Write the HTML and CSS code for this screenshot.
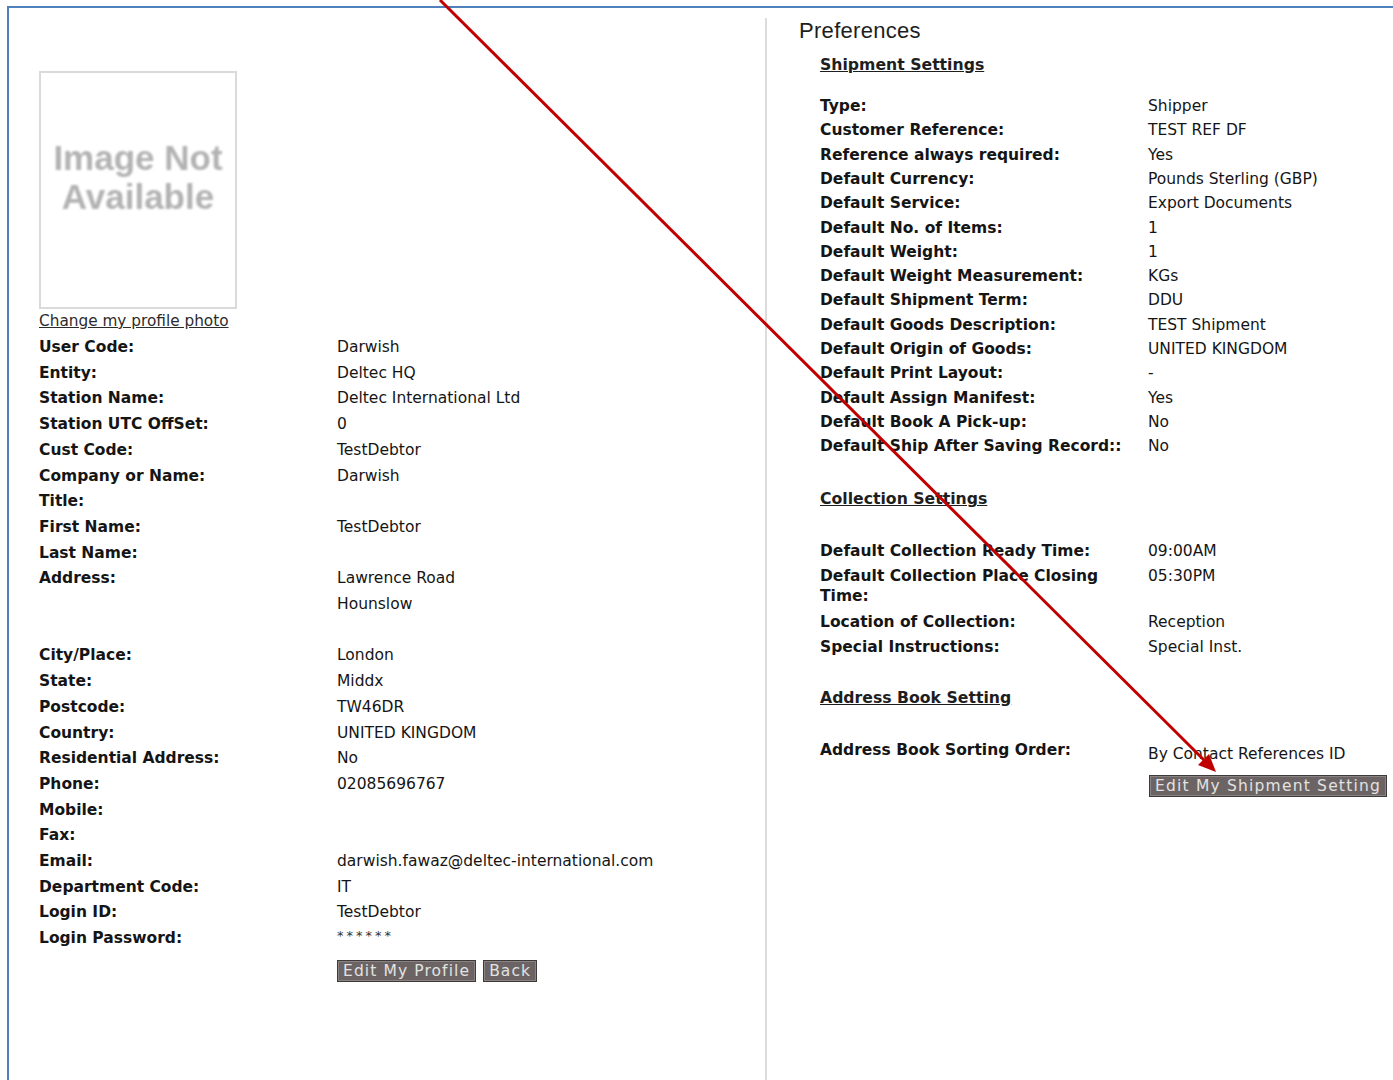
FILE: index.html
```html
<!DOCTYPE html>
<html lang="en">
<head>
<meta charset="utf-8">
<title>My Profile</title>
<link rel="stylesheet" href="styles.css">
</head>
<body>
<div class="frame">
  <div class="profile">
    <div class="photo">
      <span class="photo-text">Image Not<br>Available</span>
    </div>
    <a class="photo-link" href="#">Change my profile photo</a>
    <div class="details">
      <div class="lbl">User Code:</div><div class="val">Darwish</div>
      <div class="lbl">Entity:</div><div class="val">Deltec HQ</div>
      <div class="lbl">Station Name:</div><div class="val">Deltec International Ltd</div>
      <div class="lbl">Station UTC OffSet:</div><div class="val">0</div>
      <div class="lbl">Cust Code:</div><div class="val">TestDebtor</div>
      <div class="lbl">Company or Name:</div><div class="val">Darwish</div>
      <div class="lbl">Title:</div><div class="val"></div>
      <div class="lbl">First Name:</div><div class="val">TestDebtor</div>
      <div class="lbl">Last Name:</div><div class="val"></div>
      <div class="lbl">Address:</div><div class="val">Lawrence Road<br>Hounslow<br>&nbsp;</div>
      <div class="lbl">City/Place:</div><div class="val">London</div>
      <div class="lbl">State:</div><div class="val">Middx</div>
      <div class="lbl">Postcode:</div><div class="val">TW46DR</div>
      <div class="lbl">Country:</div><div class="val">UNITED KINGDOM</div>
      <div class="lbl">Residential Address:</div><div class="val">No</div>
      <div class="lbl">Phone:</div><div class="val">02085696767</div>
      <div class="lbl">Mobile:</div><div class="val"></div>
      <div class="lbl">Fax:</div><div class="val"></div>
      <div class="lbl">Email:</div><div class="val">darwish.fawaz@deltec-international.com</div>
      <div class="lbl">Department Code:</div><div class="val">IT</div>
      <div class="lbl">Login ID:</div><div class="val">TestDebtor</div>
      <div class="lbl">Login Password:</div><div class="val pwd">******</div>
      <div></div>
      <div class="actions">
        <button class="btn" type="button">Edit My Profile</button>
        <button class="btn" type="button">Back</button>
      </div>
    </div>
  </div>

  <div class="prefs">
    <h2 class="prefs-title">Preferences</h2>

    <h3 class="section-title first">Shipment Settings</h3>
    <div class="settings">
      <div class="lbl">Type:</div><div class="val">Shipper</div>
      <div class="lbl">Customer Reference:</div><div class="val">TEST REF DF</div>
      <div class="lbl">Reference always required:</div><div class="val">Yes</div>
      <div class="lbl">Default Currency:</div><div class="val">Pounds Sterling (GBP)</div>
      <div class="lbl">Default Service:</div><div class="val">Export Documents</div>
      <div class="lbl">Default No. of Items:</div><div class="val">1</div>
      <div class="lbl">Default Weight:</div><div class="val">1</div>
      <div class="lbl">Default Weight Measurement:</div><div class="val">KGs</div>
      <div class="lbl">Default Shipment Term:</div><div class="val">DDU</div>
      <div class="lbl">Default Goods Description:</div><div class="val">TEST Shipment</div>
      <div class="lbl">Default Origin of Goods:</div><div class="val">UNITED KINGDOM</div>
      <div class="lbl">Default Print Layout:</div><div class="val">-</div>
      <div class="lbl">Default Assign Manifest:</div><div class="val">Yes</div>
      <div class="lbl">Default Book A Pick-up:</div><div class="val">No</div>
      <div class="lbl">Default Ship After Saving Record::</div><div class="val">No</div>
    </div>

    <h3 class="section-title">Collection Settings</h3>
    <div class="settings roomy">
      <div class="lbl">Default Collection Ready Time:</div><div class="val">09:00AM</div>
      <div class="lbl">Default Collection Place Closing Time:</div><div class="val">05:30PM</div>
      <div class="lbl">Location of Collection:</div><div class="val">Reception</div>
      <div class="lbl">Special Instructions:</div><div class="val">Special Inst.</div>
    </div>

    <h3 class="section-title last">Address Book Setting</h3>
    <div class="settings">
      <div class="lbl">Address Book Sorting Order:</div>
      <div class="val sort">By Contact References ID
        <button class="btn wide" type="button">Edit My Shipment Setting</button>
      </div>
    </div>
  </div>
</div>

<svg class="pointer" width="1393" height="1080" viewBox="0 0 1393 1080" aria-hidden="true">
  <line x1="440" y1="0" x2="1206" y2="762" stroke="#c00000" stroke-width="3"/>
  <polygon points="1216,772 1198,765 1209,754" fill="#c00000"/>
</svg>
</body>
</html>
```

FILE: styles.css
```css
html, body {
  margin: 0;
  padding: 0;
  background: #ffffff;
}

body {
  font-family: "DejaVu Sans", Verdana, sans-serif;
  font-size: 15.5px;
  color: #151515;
  height: 1080px;
  overflow: hidden;
}

.frame {
  margin: 6px 0 0 7px;
  height: 1074px;
  border-top: 2px solid #4f81bd;
  border-left: 2px solid #4f81bd;
  display: flex;
  align-items: flex-start;
}

/* ---------- left: user profile ---------- */
.profile {
  width: 726px;
  padding: 63px 0 0 30px;
  flex: none;
}

.photo {
  width: 194px;
  height: 234px;
  border: 2px solid #dadada;
  display: flex;
  align-items: center;
  justify-content: center;
}

.photo-text {
  font-family: "Liberation Sans", Arial, sans-serif;
  font-weight: bold;
  font-size: 35px;
  line-height: 39px;
  color: #b2b2b2;
  text-align: center;
  filter: blur(0.9px);
  margin-top: -26px;
}

.photo-link {
  display: block;
  width: max-content;
  font-size: 15.3px;
  line-height: 22px;
  color: #2b2b2b;
  text-decoration: underline;
  margin-top: 1px;
}

.details {
  display: grid;
  grid-template-columns: 298px 1fr;
  margin-top: 3px;
  line-height: 25.7px;
}

.lbl {
  font-weight: bold;
  white-space: nowrap;
}

.val {
  white-space: nowrap;
}

.pwd {
  font-size: 13px;
  letter-spacing: 3px;
  line-height: 20px;
  color: #333333;
}

.actions {
  display: flex;
  gap: 7px;
  margin-top: 8px;
}

.btn {
  font-family: "DejaVu Sans", Verdana, sans-serif;
  font-size: 15.5px;
  letter-spacing: 1.1px;
  color: #e2e2e2;
  background: #6c6464;
  border: 1px solid #3e3a3a;
  box-shadow: inset 0 0 0 1px #8a8383;
  padding: 0 5px;
  height: 22px;
  line-height: 20px;
  cursor: pointer;
}

/* ---------- right: preferences ---------- */
.prefs {
  flex: 1;
  margin-top: 10px;
  min-height: 1064px;
  border-left: 2px solid #dcdcdc;
  padding-left: 32px;
}

.prefs-title {
  font-family: "Liberation Sans", Arial, sans-serif;
  font-size: 22px;
  letter-spacing: 0.3px;
  font-weight: normal;
  color: #1e1e1e;
  line-height: 26px;
  margin: 0;
}

.section-title {
  font-size: 15.7px;
  font-weight: bold;
  text-decoration: underline;
  color: #1e1e1e;
  line-height: 22px;
  margin: 30px 0 29px 21px;
  width: max-content;
}

.section-title.first {
  margin-top: 10px;
  margin-bottom: 18px;
}

.section-title.last {
  margin-top: 27px;
}

.settings {
  display: grid;
  grid-template-columns: 328px 1fr;
  margin-left: 21px;
}

.settings .lbl {
  white-space: normal;
  line-height: 20px;
  padding: 2.15px 16px 2.15px 0;
}

.settings .val {
  line-height: 20px;
  padding: 2.15px 0;
}

.settings.roomy .lbl,
.settings.roomy .val {
  padding-top: 2.7px;
  padding-bottom: 2.7px;
}

.settings.roomy {
  margin-top: -1px;
}

.val.sort {
  padding-top: 6px;
}

.val.sort .btn {
  display: block;
  margin-top: 11px;
  margin-left: 1px;
  letter-spacing: 1.2px;
}

/* ---------- annotation arrow ---------- */
.pointer {
  position: absolute;
  left: 0;
  top: 0;
  pointer-events: none;
}
```
